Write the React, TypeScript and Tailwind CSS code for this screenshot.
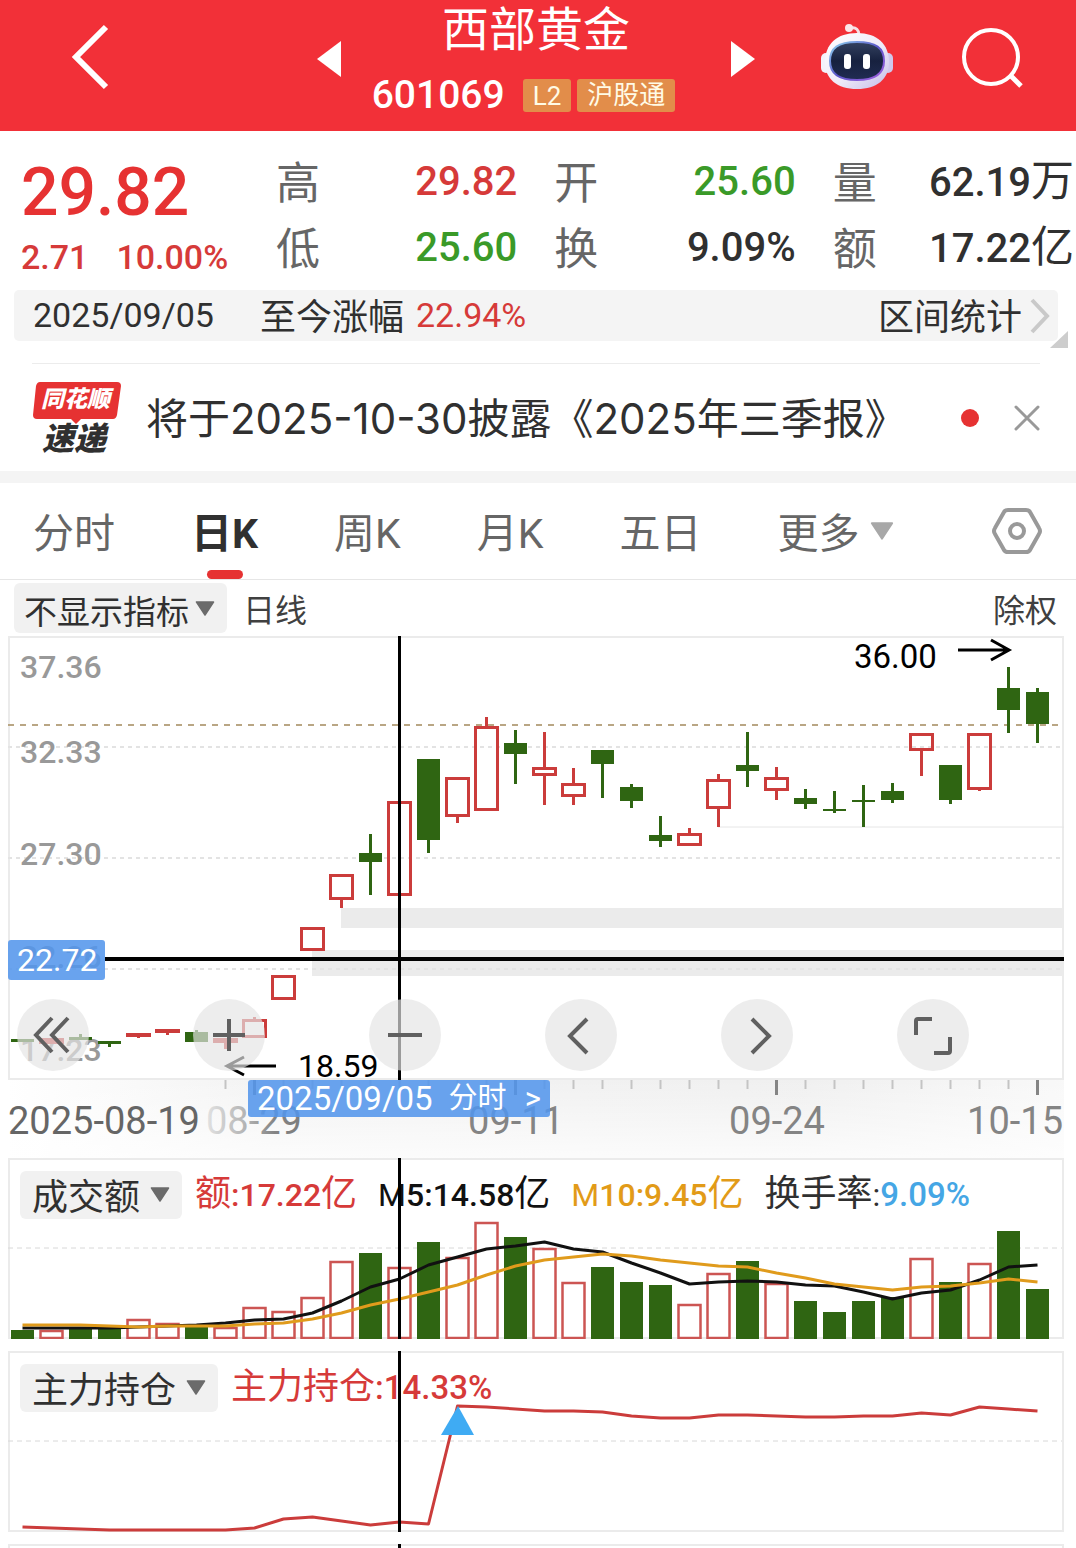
import React from "react";

type Tone = "up" | "down";

const RED = "#cb3c3b";
const GREEN = "#2f6512";
const STEP = 29;
const FIRST = 14.5;
const CROSS_X = FIRST + STEP * 13;
const xAt = (i: number) => FIRST + STEP * i;

/* tone, body top, body bottom, wick top, wick bottom */
const candles: [Tone, number, number, number, number][] = [
  ["down", 403, 406, 403, 406],
  ["up", 402, 408, 402, 408],
  ["down", 401, 404, 398, 404],
  ["down", 405, 408, 405, 411],
  ["up", 397, 401, 397, 402],
  ["up", 393, 397, 393, 399],
  ["down", 396, 406, 394, 406],
  ["up", 402, 407, 402, 413],
  ["up", 383, 402, 381, 402],
  ["up", 339, 364, 339, 364],
  ["up", 291, 315, 291, 315],
  ["up", 238, 264, 238, 272],
  ["down", 217, 226, 198, 259],
  ["up", 165, 260, 165, 260],
  ["down", 123, 204, 123, 217],
  ["up", 141, 181, 141, 187],
  ["up", 90, 175, 81, 175],
  ["down", 107, 118, 94, 148],
  ["up", 131, 140, 96, 169],
  ["up", 147, 161, 132, 169],
  ["down", 114, 128, 114, 162],
  ["down", 151, 165, 148, 172],
  ["down", 199, 205, 180, 211],
  ["up", 197, 210, 192, 210],
  ["up", 143, 173, 138, 191],
  ["down", 129, 135, 96, 151],
  ["up", 141, 155, 131, 164],
  ["down", 162, 168, 153, 173],
  ["down", 173, 175, 155, 177],
  ["down", 164, 166, 149, 191],
  ["down", 155, 164, 147, 167],
  ["up", 97, 115, 97, 140],
  ["down", 129, 164, 129, 168],
  ["up", 97, 154, 97, 155],
  ["down", 52, 74, 31, 97],
  ["down", 56, 88, 52, 107],
];

const volumeTops = [
  172, 172, 171, 171, 161, 165, 169, 169, 149, 153, 139, 103, 95, 109, 84, 99, 64, 79, 90, 124, 109, 124, 127, 146,
  115, 103, 125, 143, 154, 143, 139, 100, 124, 105, 73, 131,
];

const ma5 = [
  170, 170, 170, 170, 169, 168, 167, 165, 162, 161, 155, 143, 129, 121, 107, 99, 91, 88, 84, 91, 94, 105, 115, 126,
  124, 123, 124, 127, 128, 134, 141, 135, 132, 122, 109, 107,
];

const ma10 = [
  167, 167, 167, 168, 169, 168, 168, 168, 166, 165, 161, 155, 147, 141, 134, 127, 117, 108, 102, 99, 96, 98, 102, 105,
  108, 109, 115, 120, 126, 129, 132, 129, 128, 125, 121, 124,
];

const holding = [
  176, 177, 178, 179, 179, 179, 179, 179, 177, 168, 166, 170, 174, 171, 173, 55, 56, 58, 60, 60, 61, 65, 67, 67, 64,
  64, 65, 66, 66, 65, 65, 62, 64, 56, 58, 60,
];

const toPoints = (ys: number[]) => ys.map((y, i) => `${xAt(i)},${y}`).join(" ");

function BackIcon() {
  return (
    <svg width="40" height="68" viewBox="0 0 40 68" fill="none" aria-hidden="true">
      <path d="M37 4 7 34l30 30" stroke="#fff" strokeWidth="6" />
    </svg>
  );
}

function RobotIcon() {
  return (
    <svg width="72" height="68" viewBox="0 0 72 68" aria-hidden="true">
      <defs>
        <linearGradient id="shell" x1="0" y1="0" x2="1" y2="1">
          <stop offset="0" stopColor="#ffffff" />
          <stop offset="0.55" stopColor="#efeaf8" />
          <stop offset="1" stopColor="#c3bce8" />
        </linearGradient>
        <linearGradient id="rim" x1="0" y1="0" x2="1" y2="1">
          <stop offset="0" stopColor="#8fd6f0" />
          <stop offset="0.5" stopColor="#5b56c9" />
          <stop offset="1" stopColor="#a45fe0" />
        </linearGradient>
        <linearGradient id="visor" x1="0" y1="0" x2="0" y2="1">
          <stop offset="0" stopColor="#33415f" />
          <stop offset="0.5" stopColor="#17213f" />
          <stop offset="1" stopColor="#202c52" />
        </linearGradient>
      </defs>
      <path d="M30 4c5-1 8 2 8 7" fill="none" stroke="#f6dfe6" strokeWidth="3" />
      <circle cx="28" cy="4" r="4" fill="#fbe6ea" />
      <rect x="0" y="29" width="10" height="20" rx="5" fill="#f4f2fb" />
      <rect x="62" y="29" width="10" height="20" rx="5" fill="#cfc8ec" />
      <path d="M36 9c20 0 32 11 32 29 0 17-12 27-32 27S4 55 4 38C4 20 16 9 36 9Z" fill="url(#shell)" />
      <path
        d="M36 18c19 0 27 6 27 19 0 12-8 19-27 19S9 49 9 37c0-13 8-19 27-19Z"
        fill="url(#visor)"
        stroke="url(#rim)"
        strokeWidth="2"
      />
      <rect x="23" y="30" width="7" height="15" rx="3" fill="#fff" />
      <rect x="42" y="30" width="7" height="15" rx="3" fill="#fff" />
    </svg>
  );
}

function SearchIcon() {
  return (
    <svg width="62" height="62" viewBox="0 0 62 62" fill="none" aria-hidden="true">
      <circle cx="30" cy="30" r="27" stroke="#fff" strokeWidth="4" />
      <path d="m49 48 11 11" stroke="#fff" strokeWidth="5" />
    </svg>
  );
}

function Caret({ size = 20, color = "#6b6b6b" }: { size?: number; color?: string }) {
  return (
    <svg width={size} height={size * 0.75} viewBox="0 0 20 15" aria-hidden="true">
      <path d="M1.5 1h17L10 14Z" fill={color} stroke={color} strokeWidth="1.5" strokeLinejoin="round" />
    </svg>
  );
}

function Header() {
  return (
    <header className="grid h-[131px] grid-cols-[1fr_auto_1fr] bg-[#f23038] text-white">
      <div className="flex items-center pb-[18px] pl-[69px]">
        <button type="button" aria-label="返回">
          <BackIcon />
        </button>
      </div>
      <div className="mr-[4px] flex w-[438px] justify-between">
        <button type="button" aria-label="上一只" className="self-center pb-[14px]">
          <svg width="24" height="36" viewBox="0 0 24 36" aria-hidden="true">
            <path d="M24 0v36L0 18Z" fill="#fff" />
          </svg>
        </button>
        <div className="flex flex-col items-center">
          <h1 className="h-[68px] text-[47px] leading-[60px] font-normal">西部黄金</h1>
          <div className="mr-[25px] flex items-center gap-[6px] leading-[54px]">
            <span className="mr-[12px] text-[39px] font-medium">601069</span>
            <span className="h-[33px] rounded-[3px] bg-[#e28d4a] px-[10px] text-[26px] leading-[34px] text-[#fffbe6]">
              L2
            </span>
            <span className="h-[33px] rounded-[3px] bg-[#e28d4a] px-[10px] text-[26px] leading-[32px] text-[#fffbe6]">
              沪股通
            </span>
          </div>
        </div>
        <button type="button" aria-label="下一只" className="self-center pb-[14px]">
          <svg width="24" height="36" viewBox="0 0 24 36" aria-hidden="true">
            <path d="M0 0v36l24-18Z" fill="#fff" />
          </svg>
        </button>
      </div>
      <div className="flex items-center justify-end gap-[68px] pr-[53px] pb-[16px]">
        <button type="button" aria-label="智能助手">
          <RobotIcon />
        </button>
        <button type="button" aria-label="搜索">
          <SearchIcon />
        </button>
      </div>
    </header>
  );
}

function Stat({ label, value, unit, tone }: { label: string; value: string; unit?: string; tone: string }) {
  return (
    <div className="flex h-[66px] items-center justify-between leading-[66px]">
      <dt className="text-[44px] text-[#666]">{label}</dt>
      <dd className={tone}>
        <span className="text-[40px] font-medium">{value}</span>
        {unit && <span className="text-[43px]">{unit}</span>}
      </dd>
    </div>
  );
}

function Quote() {
  return (
    <section className="flex pt-[17px] pr-[2px] pb-[6px] pl-[21px]">
      <div className="w-[255px] shrink-0 text-[#d63a39]">
        <div className="h-[80px] text-[66px] leading-[90px] font-medium text-[#e63232]">29.82</div>
        <div className="flex gap-[28px] text-[34px] leading-[58px] font-medium">
          <span>2.71</span>
          <span>10.00%</span>
        </div>
      </div>
      <dl className="grid flex-1 grid-cols-3 content-start gap-x-[37px] pt-[3px]">
        <Stat label="高" value="29.82" tone="pt-[3px] text-[#d63a39]" />
        <Stat label="开" value="25.60" tone="pt-[3px] text-[#3a9a28]" />
        <Stat label="量" value="62.19" unit="万" tone="pt-[3px] text-[#303030]" />
        <Stat label="低" value="25.60" tone="pt-[3px] text-[#3a9a28]" />
        <Stat label="换" value="9.09%" tone="pt-[3px] text-[#303030]" />
        <Stat label="额" value="17.22" unit="亿" tone="pt-[3px] text-[#303030]" />
      </dl>
    </section>
  );
}

function RangeBar() {
  return (
    <section className="relative -mt-[2px] mr-[18px] ml-[14px] flex h-[51px] items-center rounded-[5px] bg-[#f4f4f4] pr-[8px] pl-[19px] text-[34px] leading-[51px] text-[#303030]">
      <span>2025/09/05</span>
      <span className="ml-[46px] pt-[5px] text-[36px]">至今涨幅</span>
      <span className="ml-[12px] text-[#d63a39]">22.94%</span>
      <a href="#range" className="ml-auto flex items-center gap-[8px] text-[36px]">
        <span className="pt-[5px]">区间统计</span>
        <svg width="20" height="36" viewBox="0 0 20 36" fill="none" aria-hidden="true">
          <path d="m2 2 15 16L2 34" stroke="#c9c9c9" strokeWidth="4" />
        </svg>
      </a>
      <svg className="absolute top-[41px] -right-[10px]" width="18" height="17" viewBox="0 0 18 17" aria-hidden="true">
        <path d="M18 0v17H0Z" fill="#cdcdcd" />
      </svg>
    </section>
  );
}

function News() {
  return (
    <section className="mt-[22px] mr-[36px] ml-[32px] flex h-[108px] items-center border-t border-[#ececec]">
      <div className="grid w-[90px] shrink-0 italic">
        <svg className="[grid-area:1/1]" width="90" height="44" viewBox="0 0 90 44" aria-hidden="true">
          <path
            d="M8 1h77q4 0 4 4l-4 29q-1 4-4 4H49l-5 5-5-5H5q-4 0-4-4L4 5q1-4 4-4Z"
            fill="#e63232"
          />
        </svg>
        <span className="pl-[9px] text-[23px] leading-[38px] font-black text-white [grid-area:1/1]">同花顺</span>
        <span className="h-[30px] pl-[10px] text-[32px] leading-[28px] font-black text-[#303030]">速递</span>
      </div>
      <a
        href="#news"
        className="ml-[24px] pt-[3px] font-['Inter','Noto_Sans_CJK_SC',sans-serif] text-[42px] leading-[60px] whitespace-nowrap text-[#303030]"
      >
        将于2025-10-30披露《2025年三季报》
      </a>
      <span className="ml-auto size-[18px] shrink-0 rounded-full bg-[#e63232]" />
      <button type="button" aria-label="关闭" className="ml-[35px]">
        <svg width="26" height="26" viewBox="0 0 26 26" fill="none" aria-hidden="true">
          <path d="m2 2 22 22M24 2 2 24" stroke="#999" strokeWidth="3" strokeLinecap="round" />
        </svg>
      </button>
    </section>
  );
}

function Tabs() {
  return (
    <nav className="flex h-[97px] items-stretch gap-[76px] border-b border-[#e6e6e6] px-[33px] pt-[5px] text-[41px] leading-[90px] text-[#666]">
      <button type="button">分时</button>
      <button type="button" aria-current="page" className="relative font-bold text-[#303030]">
        日K
        <span className="absolute bottom-0 left-1/2 h-[9px] w-[36px] -translate-x-1/2 rounded-full bg-[#e63232]" />
      </button>
      <button type="button">周K</button>
      <button type="button">月K</button>
      <button type="button">五日</button>
      <button type="button" aria-haspopup="menu" className="flex items-center gap-[10px]">
        更多
        <span className="pb-[5px]">
          <Caret size={24} color="#a8a8a8" />
        </span>
      </button>
      <button type="button" aria-label="设置" className="ml-auto pb-[5px]">
        <svg width="52" height="48" viewBox="0 0 52 48" fill="none" stroke="#999" strokeWidth="4" aria-hidden="true">
          <path d="M17 3h18q3 0 4 2l9 16q2 3 0 6l-9 16q-1 2-4 2H17q-3 0-4-2L4 27q-2-3 0-6l9-16q1-2 4-2Z" />
          <circle cx="26" cy="24" r="7" />
        </svg>
      </button>
    </nav>
  );
}

function Picker({ label, name, className }: { label: string; name: string; className: string }) {
  return (
    <label className="relative flex items-center">
      <select
        aria-label={name}
        className={`appearance-none rounded-[6px] bg-[#f1f1f1] text-[#303030] outline-none ${className}`}
      >
        <option>{label}</option>
      </select>
      <span className="pointer-events-none absolute right-[12px] flex">
        <Caret />
      </span>
    </label>
  );
}

function ChartToolbar() {
  return (
    <div className="flex h-[56px] items-center pr-[19px] pl-[14px] text-[32px] text-[#404040]">
      <Picker label="不显示指标" name="主图指标" className="h-[50px] pt-[5px] pr-[38px] pl-[10px] text-[33px]" />
      <span className="ml-[16px] pt-[5px]">日线</span>
      <button type="button" className="ml-auto pt-[5px]">
        除权
      </button>
    </div>
  );
}

function Grid({ height, lines }: { height: number; lines: number[] }) {
  return (
    <>
      <rect x="1" y="1" width="1054" height={height - 2} fill="none" stroke="#ebebeb" strokeWidth="2" />
      {lines.map((y) => (
        <path key={y} d={`M0 ${y}H1054`} stroke="#e3e3e3" strokeWidth="2" strokeDasharray="4 4" />
      ))}
    </>
  );
}

function CandleChart() {
  const axisLabels: [string, number][] = [
    ["37.36", 42],
    ["32.33", 127],
    ["27.30", 229],
    ["22.26", 332],
    ["17.23", 425],
  ];
  return (
    <svg className="block h-auto w-full" viewBox="0 0 1056 522" role="img" aria-label="日K线图">
      <defs>
        <linearGradient id="axisShade" x1="0" y1="0" x2="1" y2="0">
          <stop offset="0" stopColor="#e9e9e9" stopOpacity="0" />
          <stop offset="0.25" stopColor="#e9e9e9" stopOpacity="0.55" />
          <stop offset="0.75" stopColor="#e9e9e9" stopOpacity="0.7" />
          <stop offset="1" stopColor="#e9e9e9" stopOpacity="0.3" />
        </linearGradient>
        <linearGradient id="axisFade" x1="0" y1="0" x2="0" y2="1">
          <stop offset="0" stopColor="#fff" stopOpacity="0" />
          <stop offset="1" stopColor="#fff" stopOpacity="0.75" />
        </linearGradient>
        <linearGradient id="labelFade" gradientUnits="userSpaceOnUse" x1="198" y1="0" x2="296" y2="0">
          <stop offset="0" stopColor="#e2e2e2" />
          <stop offset="0.4" stopColor="#b4b4b4" />
          <stop offset="0.7" stopColor="#848484" />
          <stop offset="1" stopColor="#7c7c7c" />
        </linearGradient>
      </defs>

      <rect x="0" y="444" width="1056" height="78" fill="url(#axisShade)" />
      <rect x="0" y="444" width="1056" height="78" fill="url(#axisFade)" />

      <rect x="333" y="272" width="723" height="20" fill="#ebebeb" />
      <rect x="304" y="314" width="752" height="26" fill="#ebebeb" />
      <Grid height={444} lines={[111, 222, 333]} />
      <path d="M710 191H1056" stroke="#e6e6e6" />
      <path d="M0 89H1050" stroke="#b9a684" strokeWidth="2" strokeDasharray="6 6" />

      <g fill="#999" fontSize="32" fontWeight="500">
        {axisLabels.map(([text, y]) => (
          <text key={text} x="12" y={y}>
            {text}
          </text>
        ))}
      </g>

      {candles.map(([tone, top, bottom, high, low], i) => {
        const x = xAt(i) - 0.5;
        if (tone === "down") {
          return (
            <g key={i} fill={GREEN}>
              <rect x={x - 1} y={high} width="3" height={low - high} />
              <rect x={x - 11} y={top} width="23" height={bottom - top} />
            </g>
          );
        }
        return (
          <g key={i}>
            <rect x={x - 1} y={high} width="3" height={top - high} fill={RED} />
            <rect x={x - 1} y={bottom} width="3" height={low - bottom} fill={RED} />
            {bottom - top < 7 ? (
              <rect x={x - 12} y={top} width="25" height={bottom - top} fill={RED} />
            ) : (
              <rect
                x={x - 10.5}
                y={top + 1.5}
                width="22"
                height={bottom - top - 3}
                fill="none"
                stroke={RED}
                strokeWidth="3"
              />
            )}
          </g>
        );
      })}

      <g fill="none" stroke="#000" strokeWidth="3">
        <path d="M950 14h50M983 4l18 10-18 10" />
        <path d="M268 430h-48M236 421l-17 9 17 9" />
      </g>
      <text x="846" y="32" fontSize="33">
        36.00
      </text>
      <text x="290" y="441" fontSize="32">
        18.59
      </text>

      {candles.map((_, i) => {
        if (i < 7) return null;
        const major = i % 9 === 8;
        return (
          <path
            key={i}
            d={`M${xAt(i)} 444v${major ? 15 : 9}`}
            stroke={major ? "#858585" : "#c4c4c4"}
            strokeWidth={major ? 3 : 2}
          />
        );
      })}
      <g fontSize="38" fill="#848484">
        <text x="198" y="498" fill="url(#labelFade)">
          08-29
        </text>
        <text x="508" y="498" textAnchor="middle">
          09-11
        </text>
        <text x="769" y="498" textAnchor="middle">
          09-24
        </text>
        <text x="1055" y="498" textAnchor="end">
          10-15
        </text>
        <text x="0" y="498" fill="#666">
          2025-08-19
        </text>
      </g>

      <path d="M97 323H1056" stroke="#000" strokeWidth="4" />
      <path d={`M${CROSS_X} 0V444`} stroke="#000" strokeWidth="3" />
      <rect x="0" y="304" width="97" height="40" rx="3" fill="#5395ec" fillOpacity="0.87" />
      <text x="9" y="335" fontSize="32" fill="#fff">
        22.72
      </text>
    </svg>
  );
}

const controls: { name: string; icon: React.ReactNode }[] = [
  { name: "最早", icon: <path d="M35 19 19 36l16 17M51 19 35 36l16 17" /> },
  { name: "放大", icon: <path d="M36 20v32M20 36h32" /> },
  { name: "缩小", icon: <path d="M19 36h34" /> },
  { name: "向左", icon: <path d="M42 20 25 37l17 17" /> },
  { name: "向右", icon: <path d="m31 20 17 17-17 17" /> },
  { name: "全屏", icon: <path d="M19 36V22q0-2 2-2h14M53 38v14q0 2-2 2H37" /> },
];

function MainChart() {
  return (
    <section className="relative mr-[12px] ml-[8px]">
      <CandleChart />
      <div className="absolute right-[-9px] bottom-[87px] left-[9px] grid grid-cols-6">
        {controls.map(({ name, icon }) => (
          <button
            key={name}
            type="button"
            aria-label={name}
            className="size-[72px] rounded-full bg-[rgba(228,228,228,0.68)]"
          >
            <svg width="72" height="72" viewBox="0 0 72 72" fill="none" stroke="#606060" strokeWidth="4" aria-hidden="true">
              {icon}
            </svg>
          </button>
        ))}
      </div>
      <button
        type="button"
        className="absolute bottom-[41px] left-[240px] flex h-[37px] items-center rounded-[3px] bg-[rgba(83,149,236,0.87)] px-[9px] text-[33px] leading-[41px] whitespace-nowrap text-white"
      >
        2025/09/05
        <span className="ml-[16px] text-[29px]">分时</span>
        <span className="ml-[18px] text-[31px]">&gt;</span>
      </button>
    </section>
  );
}

function VolumePanel() {
  return (
    <section className="mr-[12px] ml-[8px] grid">
      <div className="flex items-center gap-[21px] self-start pt-[12px] pl-[12px] text-[32px] leading-[48px] whitespace-nowrap text-[#303030] [grid-area:1/1]">
        <Picker label="成交额" name="副图指标一" className="h-[48px] pt-[3px] pr-[41px] pl-[12px] text-[36px]" />
        <span className="-ml-[8px] font-medium text-[#d63a39]">
          <span className="text-[36px] font-normal">额</span>:17.22<span className="text-[36px] font-normal">亿</span>
        </span>
        <span className="font-medium text-[#111]">
          <span className="font-normal">M</span>5:14.58<span className="text-[36px] font-normal">亿</span>
        </span>
        <span className="font-medium text-[#e29b18]">
          <span className="font-normal">M</span>10:9.45<span className="text-[36px] font-normal">亿</span>
        </span>
        <span>
          <span className="text-[36px]">换手率</span>:
          <span className="text-[33px] font-medium text-[#45a6e5]">9.09%</span>
        </span>
      </div>
      <svg
        className="pointer-events-none relative block h-auto w-full [grid-area:1/1]"
        viewBox="0 0 1056 181"
        role="img"
        aria-label="成交额"
      >
        <Grid height={181} lines={[]} />
        <path d="M0 90H1054" stroke="#d8d8d8" strokeDasharray="5 4" />
        {volumeTops.map((top, i) =>
          candles[i][0] === "down" ? (
            <rect key={i} x={xAt(i) - 11.5} y={top} width="23" height={181 - top} fill={GREEN} />
          ) : (
            <rect
              key={i}
              x={xAt(i) - 11}
              y={top + 1}
              width="22"
              height={179 - top}
              fill="#fff"
              stroke="#cc5553"
              strokeWidth="2.5"
            />
          ),
        )}
        <polyline points={toPoints(ma5)} fill="none" stroke="#111" strokeWidth="3" strokeLinejoin="round" />
        <polyline points={toPoints(ma10)} fill="none" stroke="#e09b1c" strokeWidth="3" strokeLinejoin="round" />
        <path d={`M${CROSS_X} 0V181`} stroke="#000" strokeWidth="3" />
      </svg>
    </section>
  );
}

function HoldingPanel() {
  return (
    <section className="mt-[12px] mr-[12px] ml-[8px] grid">
      <div className="flex items-center gap-[13px] self-start pt-[12px] pl-[12px] text-[33px] leading-[48px] whitespace-nowrap [grid-area:1/1]">
        <Picker label="主力持仓" name="副图指标二" className="h-[48px] pt-[3px] pr-[41px] pl-[12px] text-[36px]" />
        <span className="font-medium text-[#d63a39]">
          <span className="text-[36px] font-normal">主力持仓</span>:14.33%
        </span>
      </div>
      <svg
        className="pointer-events-none relative block h-auto w-full [grid-area:1/1]"
        viewBox="0 0 1056 181"
        role="img"
        aria-label="主力持仓"
      >
        <Grid height={181} lines={[]} />
        <path d="M0 90H1054" stroke="#d8d8d8" strokeDasharray="5 4" />
        <polyline points={toPoints(holding)} fill="none" stroke={RED} strokeWidth="3" strokeLinejoin="round" />
        <path d="M450 55l16 29h-33Z" fill="#3fabf3" />
        <path d={`M${CROSS_X} 0V181`} stroke="#000" strokeWidth="3" />
      </svg>
    </section>
  );
}

function NextPanel() {
  return (
    <section className="mt-[12px] mr-[12px] ml-[8px] h-[4px] overflow-hidden">
      <svg className="block h-auto w-full" viewBox="0 0 1056 181" aria-hidden="true">
        <Grid height={181} lines={[]} />
        <path d={`M${CROSS_X} 0V181`} stroke="#000" strokeWidth="3" />
      </svg>
    </section>
  );
}

export default function App() {
  return (
    <main className="overflow-x-hidden bg-white font-['Roboto','Noto_Sans_CJK_SC',sans-serif]" lang="zh-CN">
      <Header />
      <Quote />
      <RangeBar />
      <News />
      <div className="h-[12px] bg-[#f4f4f4]" />
      <Tabs />
      <ChartToolbar />
      <MainChart />
      <VolumePanel />
      <HoldingPanel />
      <NextPanel />
    </main>
  );
}
